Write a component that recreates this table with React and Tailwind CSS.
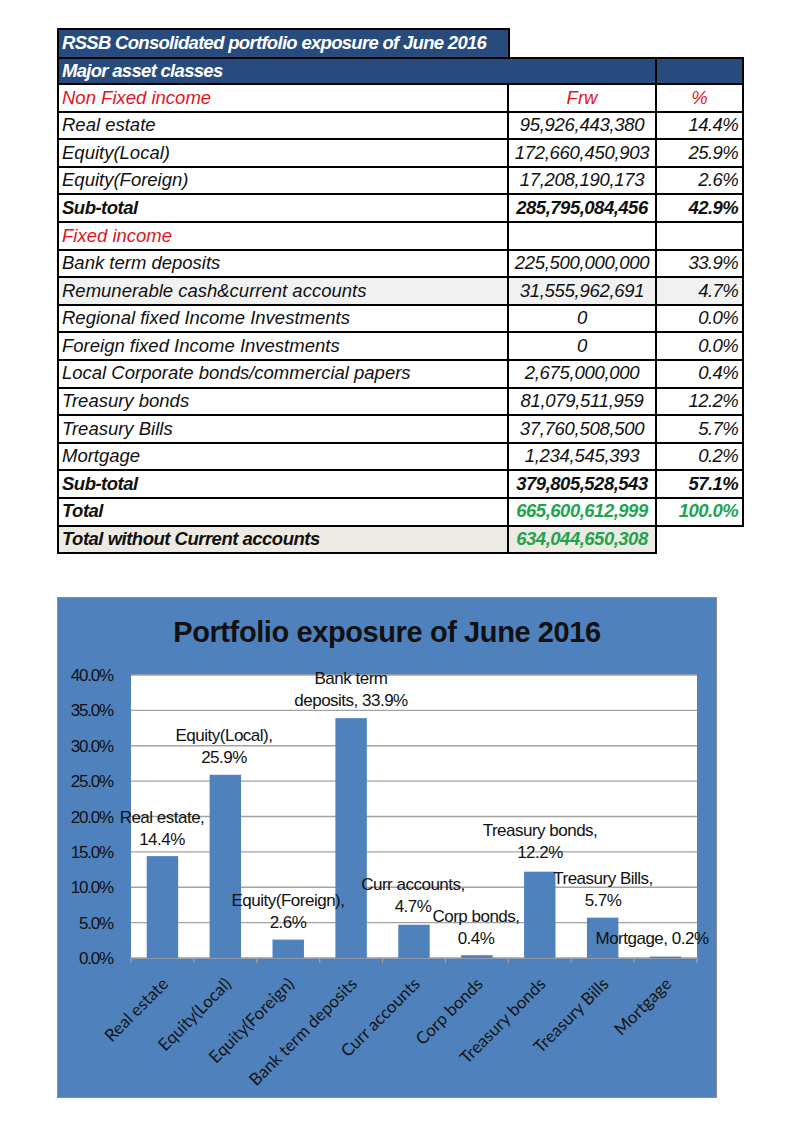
const rows = [
  { label: 'Non Fixed income', frw: 'Frw', pct: '%', section: true },
  { label: 'Real estate', frw: '95,926,443,380', pct: '14.4%' },
  { label: 'Equity(Local)', frw: '172,660,450,903', pct: '25.9%' },
  { label: 'Equity(Foreign)', frw: '17,208,190,173', pct: '2.6%' },
  { label: 'Sub-total', frw: '285,795,084,456', pct: '42.9%', bold: true },
  { label: 'Fixed income', frw: '', pct: '', section: true },
  { label: 'Bank term deposits', frw: '225,500,000,000', pct: '33.9%' },
  { label: 'Remunerable cash&current accounts', frw: '31,555,962,691', pct: '4.7%', shade: 'bg-[#f1f1f1]' },
  { label: 'Regional fixed Income Investments', frw: '0', pct: '0.0%' },
  { label: 'Foreign fixed Income Investments', frw: '0', pct: '0.0%' },
  { label: 'Local Corporate bonds/commercial papers', frw: '2,675,000,000', pct: '0.4%' },
  { label: 'Treasury bonds', frw: '81,079,511,959', pct: '12.2%' },
  { label: 'Treasury Bills', frw: '37,760,508,500', pct: '5.7%' },
  { label: 'Mortgage', frw: '1,234,545,393', pct: '0.2%' },
  { label: 'Sub-total', frw: '379,805,528,543', pct: '57.1%', bold: true },
  { label: 'Total', frw: '665,600,612,999', pct: '100.0%', bold: true, green: true },
  { label: 'Total without Current accounts', frw: '634,044,650,308', pct: null, bold: true, green: true, shade: 'bg-[#edeae3]' },
];

const bars = [
  { name: 'Real estate', v: 14.4, lines: ['Real estate,', '14.4%'], lx: 162, ly: 817 },
  { name: 'Equity(Local)', v: 25.9, lines: ['Equity(Local),', '25.9%'], lx: 224, ly: 735 },
  { name: 'Equity(Foreign)', v: 2.6, lines: ['Equity(Foreign),', '2.6%'], lx: 288, ly: 900 },
  { name: 'Bank term deposits', v: 33.9, lines: ['Bank term', 'deposits, 33.9%'], lx: 351, ly: 678 },
  { name: 'Curr accounts', v: 4.7, lines: ['Curr accounts,', '4.7%'], lx: 413, ly: 884 },
  { name: 'Corp bonds', v: 0.4, lines: ['Corp bonds,', '0.4%'], lx: 476, ly: 916 },
  { name: 'Treasury bonds', v: 12.2, lines: ['Treasury bonds,', '12.2%'], lx: 540, ly: 830 },
  { name: 'Treasury Bills', v: 5.7, lines: ['Treasury Bills,', '5.7%'], lx: 603, ly: 878 },
  { name: 'Mortgage', v: 0.2, lines: ['Mortgage, 0.2%'], lx: 652, ly: 938 },
];

// page -> svg offsets
const OX = 58;
const OY = 667;
const L = 73, R = 639, T = 8, B = 291;
const CW = (R - L) / 9;
const yOf = (p) => B - (p / 40) * (B - T);

const Row = ({ r }) => {
  const labelColor = r.section ? 'text-[#e3141b]' : 'text-[#111]';
  const numColor = r.section ? 'text-[#e3141b]' : r.green ? 'text-[#1ea44f]' : 'text-[#111]';
  const weight = r.bold ? 'font-bold tracking-[-0.5px]' : '';
  return (
    <div className={`grid grid-cols-[450px_148px_87px] h-[27.6px] ${r.shade || 'bg-white'}`}>
      <div className={`border-r-2 border-b-2 border-black flex items-center pl-[3px] italic ${labelColor} ${weight}`}>
        {r.label}
      </div>
      <div className={`border-r-2 border-b-2 border-black flex items-center justify-center italic ${numColor} ${weight} ${r.section ? '' : 'tracking-[-0.3px]'}`}>
        {r.frw}
      </div>
      {r.pct === null ? (
        <div className="bg-white" />
      ) : (
        <div className={`border-r-2 border-b-2 border-black flex items-center italic ${numColor} ${weight} ${r.section ? 'justify-center' : 'justify-end pr-[4px] tracking-[-0.6px]'}`}>
          {r.pct}
        </div>
      )}
    </div>
  );
};

const Chart = () => (
  <svg width="658" height="430" className="block">
    <rect x={L} y={T} width={R - L} height={B - T} fill="#ffffff" />
    {[0, 5, 10, 15, 20, 25, 30, 35, 40].map((p) => (
      <g key={p}>
        <line x1={L} x2={R} y1={yOf(p)} y2={yOf(p)} stroke="#a3a3a3" strokeWidth="1.3" />
        <text
          x={55}
          y={yOf(p) + 6}
          textAnchor="end"
          fontFamily="'Liberation Sans', Arial, sans-serif"
          fontSize="17"
          letterSpacing="-1.2"
          fill="#111"
        >
          {p.toFixed(1)}%
        </text>
      </g>
    ))}
    {Array.from({ length: 10 }).map((_, k) => (
      <line key={k} x1={L + k * CW} x2={L + k * CW} y1={B} y2={B + 5} stroke="#a3a3a3" strokeWidth="1.3" />
    ))}
    {bars.map((b, i) => {
      const cx = L + (i + 0.5) * CW;
      const h = (b.v / 40) * (B - T);
      return <rect key={b.name} x={cx - CW / 4} y={B - h} width={CW / 2} height={h} fill="#4f81bd" />;
    })}
    {bars.map((b, i) => {
      const cx = L + (i + 0.5) * CW;
      const ax = cx + 7;
      const ay = 985 - OY;
      return (
        <text
          key={b.name}
          x={ax}
          y={ay}
          textAnchor="end"
          transform={`rotate(-45 ${ax} ${ay})`}
          fontFamily="Lato, 'Open Sans', sans-serif"
          fontSize="17"
          fill="#151515"
        >
          {b.name}
        </text>
      );
    })}
    {bars.map((b) => (
      <text
        key={b.name}
        textAnchor="middle"
        fontFamily="'Liberation Sans', Arial, sans-serif"
        fontSize="17"
        letterSpacing="-0.5"
        fill="#111"
      >
        {b.lines.map((ln, j) => (
          <tspan key={j} x={b.lx - OX} y={b.ly - OY + 6 + j * 22}>
            {ln}
          </tspan>
        ))}
      </text>
    ))}
  </svg>
);

export default function App() {
  return (
    <div className="w-[796px] h-[1131px] bg-white pt-[28px] pl-[57px] font-['Liberation_Sans',Arial,sans-serif] text-[18.5px] leading-none">
      <div className="w-[453px] h-[29px] bg-[#284b7d] border-t-2 border-l-2 border-r-2 border-black flex items-center pl-[3px] text-white font-bold italic tracking-[-0.7px]">
        RSSB Consolidated portfolio exposure of June 2016
      </div>
      <div className="w-[687px] border-l-2 border-t-2 border-black">
        <div className="grid grid-cols-[598px_87px] h-[26px] bg-[#284b7d]">
          <div className="border-r-2 border-b-2 border-black flex items-center pl-[3px] text-white font-bold italic tracking-[-0.7px]">
            Major asset classes
          </div>
          <div className="border-r-2 border-b-2 border-black" />
        </div>
        {rows.map((r, i) => (
          <Row key={i} r={r} />
        ))}
      </div>

      <div className="mt-[43px] w-[660px] h-[501px] bg-[#4f81bd] border border-[#8d8d8d]">
        <div className="h-[69px] flex items-center justify-center text-[29px] font-bold text-[#111] leading-none tracking-[-0.4px]">
          Portfolio exposure of June 2016
        </div>
        <Chart />
      </div>
    </div>
  );
}
